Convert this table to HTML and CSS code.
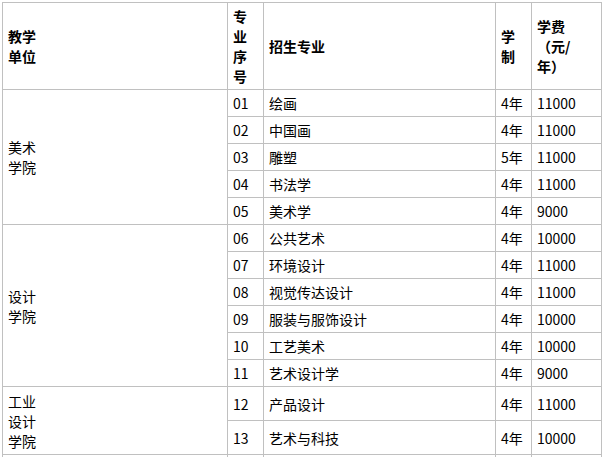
FILE: index.html
```html
<!DOCTYPE html>
<html lang="zh-CN">
<head>
<meta charset="utf-8">
<title>招生专业</title>
<link rel="stylesheet" href="styles.css">
</head>
<body>
<table class="majors">
  <colgroup>
    <col class="c-unit">
    <col class="c-no">
    <col class="c-major">
    <col class="c-years">
    <col class="c-fee">
  </colgroup>
  <thead>
    <tr>
      <th>教学<br>单位</th>
      <th>专业序号</th>
      <th>招生专业</th>
      <th>学制</th>
      <th>学费<br>（元/<br>年）</th>
    </tr>
  </thead>
  <tbody>
    <tr><td rowspan="5">美术<br>学院</td><td>01</td><td>绘画</td><td>4年</td><td>11000</td></tr>
    <tr><td>02</td><td>中国画</td><td>4年</td><td>11000</td></tr>
    <tr><td>03</td><td>雕塑</td><td>5年</td><td>11000</td></tr>
    <tr><td>04</td><td>书法学</td><td>4年</td><td>11000</td></tr>
    <tr><td>05</td><td>美术学</td><td>4年</td><td>9000</td></tr>
    <tr><td rowspan="6">设计<br>学院</td><td>06</td><td>公共艺术</td><td>4年</td><td>10000</td></tr>
    <tr><td>07</td><td>环境设计</td><td>4年</td><td>11000</td></tr>
    <tr><td>08</td><td>视觉传达设计</td><td>4年</td><td>11000</td></tr>
    <tr><td>09</td><td>服装与服饰设计</td><td>4年</td><td>10000</td></tr>
    <tr><td>10</td><td>工艺美术</td><td>4年</td><td>10000</td></tr>
    <tr><td>11</td><td>艺术设计学</td><td>4年</td><td>9000</td></tr>
    <tr class="tall"><td rowspan="2">工业<br>设计<br>学院</td><td>12</td><td>产品设计</td><td>4年</td><td>11000</td></tr>
    <tr class="tall"><td>13</td><td>艺术与科技</td><td>4年</td><td>10000</td></tr>
    <tr><td></td><td></td><td></td><td></td><td></td></tr>
  </tbody>
</table>
</body>
</html>
```
FILE: styles.css
```css
html, body {
  background: #fff;
}
body {
  margin: 2px;
  font-family: "Noto Sans CJK SC", "Noto Sans", sans-serif;
  font-size: 14px;
  line-height: 20px;
  color: #000;
}
.majors {
  border-collapse: collapse;
  table-layout: fixed;
  width: 599px;
}
.c-unit { width: 225px; }
.c-no { width: 36px; }
.c-major { width: 232px; }
.c-years { width: 36px; }
.c-fee { width: 70px; }
.majors th,
.majors td {
  border: 1px solid #c0c0c0;
  padding: 3px 5px;
  text-align: left;
  vertical-align: middle;
  font-weight: normal;
  overflow: hidden;
}
.majors th {
  font-weight: 700;
}
.majors tr.tall {
  height: 34px;
}
```
